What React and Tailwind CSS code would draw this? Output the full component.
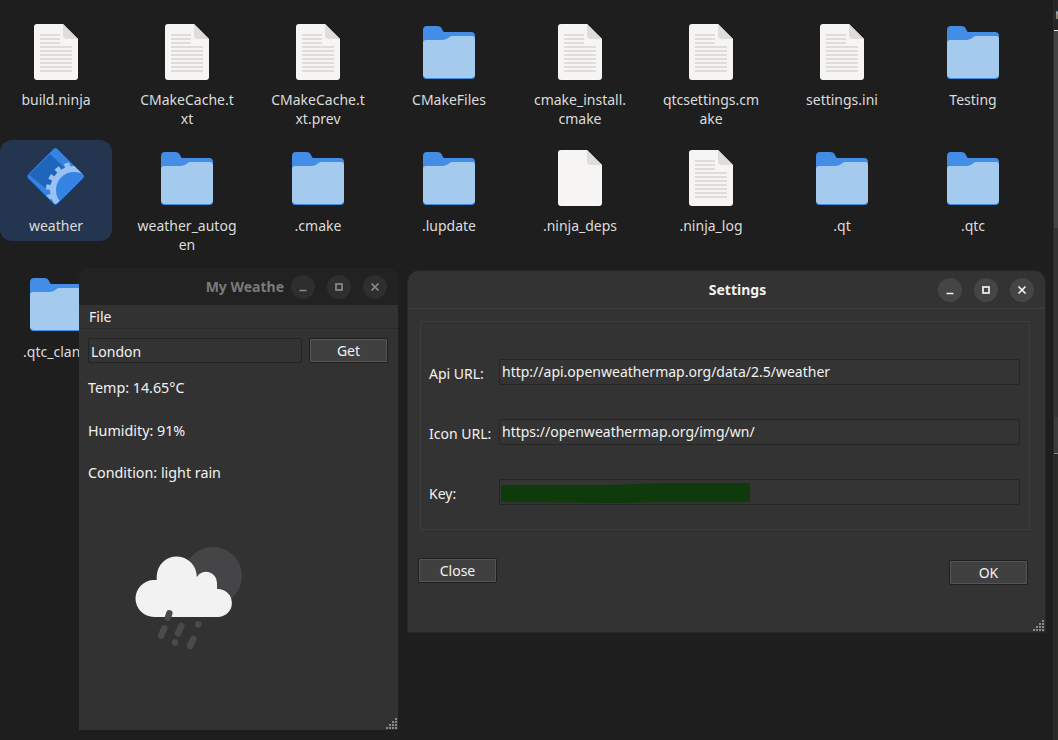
const files = [
  { name: ['build.ninja'], kind: 'text' },
  { name: ['CMakeCache.t', 'xt'], kind: 'text' },
  { name: ['CMakeCache.t', 'xt.prev'], kind: 'text' },
  { name: ['CMakeFiles'], kind: 'folder' },
  { name: ['cmake_install.', 'cmake'], kind: 'text' },
  { name: ['qtcsettings.cm', 'ake'], kind: 'text' },
  { name: ['settings.ini'], kind: 'text' },
  { name: ['Testing'], kind: 'folder' },
  { name: ['weather'], kind: 'app', selected: true },
  { name: ['weather_autog', 'en'], kind: 'folder' },
  { name: ['.cmake'], kind: 'folder' },
  { name: ['.lupdate'], kind: 'folder' },
  { name: ['.ninja_deps'], kind: 'blank' },
  { name: ['.ninja_log'], kind: 'text' },
  { name: ['.qt'], kind: 'folder' },
  { name: ['.qtc'], kind: 'folder' },
  { name: ['.qtc_clang'], kind: 'folder' },
]

function FolderIcon() {
  return (
    <svg className="mb-[1px]" width="52" height="53" viewBox="0 0 52 53">
      <path d="M0 4a4 4 0 0 1 4-4h10c3 0 4 1 5 3l1 2c.5 1 1 1 2 1h26a4 4 0 0 1 4 4v38H0z" fill="#438de6" />
      <path d="M0 17a3 3 0 0 1 3-3h16c3 0 5-1 7-2.500 1-1 2-1.500 4-1.500h19a3 3 0 0 1 3 3v36a3 3 0 0 1-3 3H3a3 3 0 0 1-3-3z" fill="#a4caee" />
      <path d="M0 49a3 3 0 0 0 3 3h46a3 3 0 0 0 3-3v.5a3.500 3.500 0 0 1-3.500 3.500h-45A3.500 3.500 0 0 1 0 49.500z" fill="#438de6" />
    </svg>
  )
}

function PageIcon({ lines }) {
  const rows = [0, 1, 2, 3, 4, 5, 6, 7, 8, 9]
  return (
    <svg width="44" height="56" viewBox="0 0 44 56">
      <path d="M3 0h26l15 15v38a3 3 0 0 1-3 3H3a3 3 0 0 1-3-3V3a3 3 0 0 1 3-3z" fill="#f6f5f4" />
      <path d="M29 0l15 15H33a4 4 0 0 1-4-4z" fill="#deddda" />
      {lines && rows.map((r) => (
        <rect key={r} x="6" y={10 + r * 4} width={r < 3 ? 20 : 32} height="2" fill="#deddda" />
      ))}
    </svg>
  )
}

function AppIcon() {
  return (
    <svg className="mb-[-1px]" width="60" height="60" viewBox="0 0 60 60">
      <defs>
        <clipPath id="diamond">
          <rect x="9" y="8.500" width="41" height="41" rx="3" transform="rotate(45 29.500 29)" />
        </clipPath>
      </defs>
      <rect x="9" y="9.500" width="41" height="41" rx="3" transform="rotate(45 29.500 30)" fill="#1c71d8" />
      <g clipPath="url(#diamond)">
        <rect x="0" y="0" width="60" height="60" fill="#3584e4" />
        <path d="M3 28L24 7 42 24 22 43z" fill="#1f65bb" />
        <circle cx="48" cy="43" r="25.500" fill="none" stroke="#99c1f1" strokeWidth="5" strokeDasharray="5 5" />
        <circle cx="48" cy="43" r="24" fill="#99c1f1" />
        <circle cx="48" cy="43" r="18" fill="#3584e4" />
      </g>
    </svg>
  )
}

function FileTile({ file }) {
  return (
    <div className={`h-[101px] w-[112px] rounded-[12px] flex flex-col items-center ${file.selected ? 'bg-[#24364f]' : ''}`}>
      <div className="h-[66px] flex items-end justify-center shrink-0">
        {file.kind === 'folder' && <FolderIcon />}
        {file.kind === 'text' && <PageIcon lines />}
        {file.kind === 'blank' && <PageIcon />}
        {file.kind === 'app' && <AppIcon />}
      </div>
      <div className="mt-[10px] text-center text-[14px] leading-[19px] text-[#dcdcdc] whitespace-nowrap">
        {file.name.map((line) => <div key={line}>{line}</div>)}
      </div>
    </div>
  )
}

function WinButton({ kind, bg, fg }) {
  return (
    <div className={`w-6 h-6 rounded-full flex items-center justify-center ${bg}`}>
      <svg width="12" height="12" viewBox="0 0 12 12" fill="none" stroke={fg}>
        {kind === 'min' && <path d="M2.500 9.500h7" strokeWidth="1.500" />}
        {kind === 'max' && <rect x="3" y="3" width="6" height="6" strokeWidth="1.700" />}
        {kind === 'close' && <path d="M2.500 2.500l7 7M9.500 2.500l-7 7" strokeWidth="1.700" />}
      </svg>
    </div>
  )
}

function ResizeGrip() {
  const dots = [[9, 0], [6, 3], [9, 3], [3, 6], [6, 6], [9, 6], [0, 9], [3, 9], [6, 9], [9, 9]]
  return (
    <svg className="absolute right-0 bottom-0" width="12" height="12" viewBox="0 0 12 12">
      {dots.map(([x, y]) => <rect key={`${x}-${y}`} x={x} y={y} width="2" height="2" fill="#8a8a8a" />)}
    </svg>
  )
}

function RainCloud() {
  return (
    <svg width="110" height="106" viewBox="0 0 110 106">
      <circle cx="80" cy="29" r="29" fill="#454547" />
      <path d="M21 70a18.500 18.500 0 0 1 0-37h2.700v-4a20 20 0 0 1 40 1a11 11 0 0 1 20.300 6v6a14 14 0 0 1 1.700 28z" fill="#f2f2f2" />
      <g stroke="#4a4a4b" strokeLinecap="round" strokeWidth="6.500" fill="none">
        <path d="M36.300 66.300L35 70.700" />
        <path d="M31.300 81.300L28 88.700" />
        <path d="M48.300 79L45 86.300" />
        <path d="M65.300 77.200v.2" />
        <path d="M42 95.200v.2" />
        <path d="M60.300 92L57 99" />
      </g>
    </svg>
  )
}

function WeatherWindow() {
  return (
    <div className="absolute left-[79px] top-[268px] w-[319px] h-[462px] rounded-t-[12px] bg-[#323232] flex flex-col overflow-hidden text-[#f2f2f2]">
      <div className="h-[37px] bg-[#222222] flex items-center justify-end shrink-0 pr-[11px]">
        <span className="mr-[7px] text-[14px] font-bold text-[#7b7b7b] whitespace-nowrap">My Weathe</span>
        <div className="flex gap-[12px]">
          <WinButton kind="min" bg="bg-[#2e2e2e]" fg="#8a8a8a" />
          <WinButton kind="max" bg="bg-[#2e2e2e]" fg="#8a8a8a" />
          <WinButton kind="close" bg="bg-[#2e2e2e]" fg="#8a8a8a" />
        </div>
      </div>
      <div className="h-[24px] border-b border-[#2a2a2a] pl-[10px] text-[14px] leading-[23px] shrink-0">File</div>
      <div className="flex items-center gap-[7px] pl-[9px] pr-[10px] mt-[9px] shrink-0">
        <div className="flex-1 h-[25px] bg-[#333333] border border-[#232323] rounded-[2px] pl-[2px] text-[14px] leading-[25px]">London</div>
        <div className="w-[79px] h-[25px] bg-[#404040] border border-[#1f1f1f] outline outline-[#555555] -outline-offset-2 rounded-[2px] text-center text-[14px] leading-[24px]">Get</div>
      </div>
      <div className="pl-[9px] mt-[15px] flex flex-col gap-[23.500px] text-[14.300px] leading-[19px] shrink-0">
        <div>Temp: 14.65°C</div>
        <div>Humidity: 91%</div>
        <div>Condition: light rain</div>
      </div>
      <div className="pl-[54px] mt-[65px]"><RainCloud /></div>
      <ResizeGrip />
    </div>
  )
}

function SettingsRow({ label, value, children }) {
  return (
    <div className="flex items-center h-[26px]">
      <div className="w-[70px] text-[14px] mt-[2px] shrink-0">{label}</div>
      <div className="relative flex-1 h-[26px] bg-[#343434] border border-[#262626] rounded-[2px] pl-[2px] text-[14px] leading-[24px]">
        {value}
        {children}
      </div>
    </div>
  )
}

function SettingsWindow() {
  return (
    <div className="absolute left-[407px] top-[270px] w-[639px] h-[363px] rounded-t-[12px] bg-[#333333] border border-[#262626] flex flex-col text-[#f2f2f2]">
      <div className="relative h-[38px] border-b border-[#3d3d3d] flex items-center justify-end shrink-0 pr-[11px]">
        <span className="absolute left-0 right-[-22px] top-[8px] text-center text-[14px] font-bold">Settings</span>
        <div className="relative flex gap-[12px]">
          <WinButton kind="min" bg="bg-[#454545]" fg="#f2f2f2" />
          <WinButton kind="max" bg="bg-[#454545]" fg="#f2f2f2" />
          <WinButton kind="close" bg="bg-[#454545]" fg="#f2f2f2" />
        </div>
      </div>
      <div className="ml-[12px] mr-[15px] mt-[12px] h-[209px] border border-[#3d3d3d] pl-[8px] pr-[9px] pt-[37px] flex flex-col gap-[34px] shrink-0">
        <SettingsRow label="Api URL:" value="http://api.openweathermap.org/data/2.5/weather" />
        <SettingsRow label="Icon URL:" value="https://openweathermap.org/img/wn/" />
        <SettingsRow label="Key:">
          <svg className="absolute left-[1px] top-[2px]" width="250" height="21" viewBox="0 0 250 21">
            <path d="M0 3h113l20-1 31-1h85v19h-85l-45 1-119-1z" fill="#0f3a0c" />
          </svg>
        </SettingsRow>
      </div>
      <div className="flex justify-between items-start pl-[10px] pr-[17px] mt-[28px]">
        <div className="w-[79px] h-[25px] bg-[#404040] border border-[#1f1f1f] outline outline-[#555555] -outline-offset-2 rounded-[2px] text-center text-[14px] leading-[23px]">Close</div>
        <div className="w-[79px] h-[25px] mt-[2px] bg-[#404040] border border-[#1f1f1f] outline outline-[#555555] -outline-offset-2 rounded-[2px] text-center text-[14px] leading-[23px]">OK</div>
      </div>
      <ResizeGrip />
    </div>
  )
}

// sliver of another window cut off at the right edge of the shot
function EdgeSliver() {
  return (
    <div className="absolute left-[1053px] top-0 w-[5px] h-[740px] border-l border-[#2b2b2b] flex flex-col">
      <div className="h-[30px] bg-[#262626] overflow-hidden text-[14px] leading-[28px] text-[#b5b5b5] pl-[1px]">r</div>
      <div className="h-[1px] bg-[#e8e8e8]" />
      <div className="h-[197px] bg-[#434343]" />
      <div className="h-[189px] bg-[#333333]" />
      <div className="h-[36px] bg-[#3c3c3c]" />
      <div className="h-[1px] bg-[#8a8a8a]" />
      <div className="flex-1 bg-[#2a2a28]" />
    </div>
  )
}

export default function App() {
  return (
    <div className="relative w-[1058px] h-[740px] overflow-hidden bg-[#1e1e1e] font-['Noto_Sans',sans-serif]">
      <div className="grid grid-cols-[repeat(8,112px)] auto-rows-[126px] gap-x-[19px] pt-[14px]">
        {files.map((f) => <FileTile key={f.name[0]} file={f} />)}
      </div>
      <WeatherWindow />
      <SettingsWindow />
      <EdgeSliver />
    </div>
  )
}
